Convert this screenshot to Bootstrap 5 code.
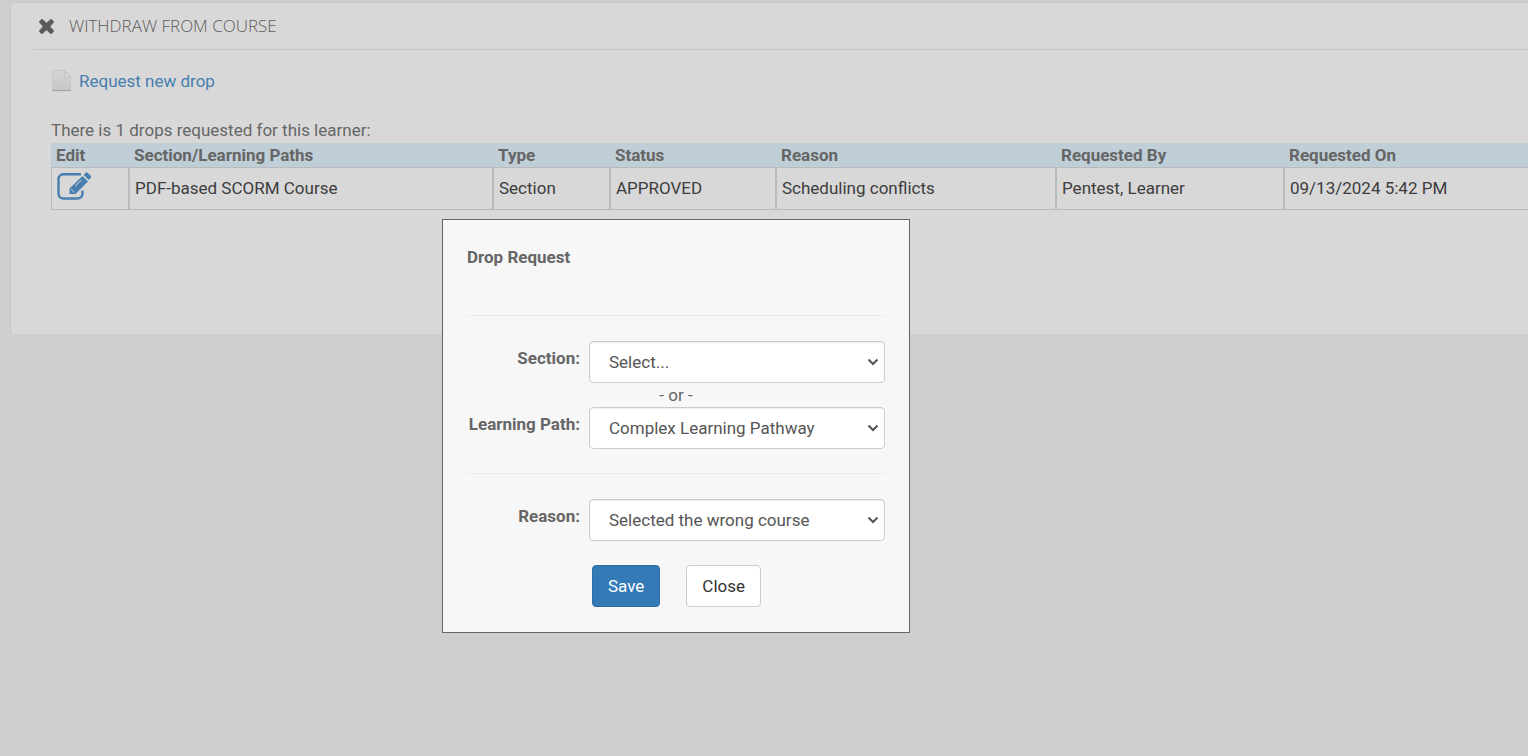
<!DOCTYPE html>
<html lang="en">
<head>
<meta charset="utf-8">
<meta name="viewport" content="width=device-width, initial-scale=1">
<title>Withdraw from Course</title>
<link href="https://cdn.jsdelivr.net/npm/bootstrap@5.3.0/dist/css/bootstrap.min.css" rel="stylesheet">
<style>
  body { background: #cfcfcf; color: #666; font-family: Roboto, sans-serif; font-size: 17px; line-height: 24px; overflow-x: hidden; }
  .course-panel { background: #d8d8d8; margin: 3px 0 0 11px; min-height: 331px; border-radius: 2px 0 0 2px; box-shadow: 0 1px 1px #c4c4c4, 0 0 1px 1px #c9c9c9; }
  .panel-title { margin-left: 22px; padding: 0 6px; height: 47px; border-bottom: 1px solid #c6c6c6; gap: 15px; }
  .panel-title h1 { font-family: "Open Sans", sans-serif; font-weight: 300; font-size: 17px; line-height: 24px; color: #5c5c5c; }
  .panel-content { padding: 19px 0 0 40px; }
  .drop-link { color: #477fb0; gap: 8px; }
  .summary { margin: 20px 0 1px; }
  .drops { table-layout: fixed; width: 100%; border-collapse: separate; border-spacing: 0; }
  .drops th { background: #c0ced7; padding: 0 5px; height: 24px; color: #666; }
  .drops td { border: 1px solid #bababa; padding: 0 5px 2px; height: 43px; color: #3d3d3d; }
  .drops td:last-child { border-right: 0; }
  .drops .c-edit { width: 78px; }
  .drops .c-path { width: 364px; }
  .drops .c-type { width: 117px; }
  .drops .c-status { width: 166px; }
  .drops .c-reason { width: 280px; }
  .drops .c-by { width: 228px; }
  .drop-dialog { left: 442px; top: 219px; width: 468px; background: #f7f7f7; border: 1px solid #666; padding: 25px 24px; }
  .drop-dialog h2 { font-size: 17px; line-height: 24px; font-weight: 700; margin: 0 0 46px; }
  .drop-dialog hr { margin: 0 0 25px; border-top: 1px solid #ebebeb; opacity: 1; }
  .field-row label { width: 113px; font-weight: 700; padding-top: 5px; }
  .field-row { gap: 9px; }
  .field-row .form-select { height: 42px; padding: 0 30px 0 19px; font-size: 17px; line-height: 24px; color: #555; border: 1px solid #ccc; border-radius: 4px; box-shadow: inset 0 1px 1px rgba(0,0,0,.075);
    background: #fff url("data:image/svg+xml,%3Csvg xmlns='http://www.w3.org/2000/svg' viewBox='0 0 12 8'%3E%3Cpath d='M1.500 1.500 6 6l4.500-4.500' fill='none' stroke='%23555' stroke-width='2'/%3E%3C/svg%3E") no-repeat right 5px center / 12px 8px; }
  .dialog-actions { margin-left: 125px; gap: 26px; }
  .dialog-actions .btn { font-size: 17px; line-height: 24px; padding: 8px 15px; border-radius: 4px; }
  .btn-save { background: #337ab7; border-color: #2e6da4; color: #fff; }
  .btn-close-dialog { background: #fff; border-color: #ccc; color: #333; }
</style>
</head>
<body>
<main class="course-panel">
  <header class="panel-title d-flex align-items-center">
    <svg width="15" height="15" viewBox="0 0 15 15" aria-hidden="true"><path d="M3.600.5 7.500 4 11.400.5a1 1 0 0 1 1.400 0L14.500 2.200a1 1 0 0 1 0 1.400L11 7.500l3.500 3.900a1 1 0 0 1 0 1.400l-1.700 1.700a1 1 0 0 1-1.400 0L7.500 11l-3.900 3.500a1 1 0 0 1-1.400 0L.5 12.800a1 1 0 0 1 0-1.400L4 7.500.5 3.600a1 1 0 0 1 0-1.400L2.200.5a1 1 0 0 1 1.400 0z" fill="#5a5a5a" stroke="#5a5a5a" stroke-width=".5"/></svg>
    <h1 class="m-0 text-uppercase">Withdraw from Course</h1>
  </header>
  <div class="panel-content">
    <a href="#" class="drop-link d-inline-flex align-items-center text-decoration-none">
      <svg width="20" height="22" viewBox="0 0 20 22" aria-hidden="true">
        <defs><linearGradient id="sheet" x1="0" y1="0" x2="0" y2="1"><stop offset="0" stop-color="#d5d5d5"/><stop offset="1" stop-color="#c6c6c6"/></linearGradient></defs>
        <path d="M1.500 0.500H13.500L19.500 7v14H1.500z" fill="url(#sheet)" stroke="#c8c8c8"/>
        <path d="M12.500.5 19.500 7.500Q15.500 5.500 14 7.500 14.500 3 12.500.5z" fill="#dedede" stroke="#bdbdbd" stroke-width=".8"/>
        <path d="M1 20.500H20" stroke="#a3a3a3"/>
      </svg>
      <span>Request new drop</span>
    </a>
    <p class="summary">There is 1 drops requested for this learner:</p>
    <table class="drops">
      <thead>
        <tr><th class="c-edit">Edit</th><th class="c-path">Section/Learning Paths</th><th class="c-type">Type</th><th class="c-status">Status</th><th class="c-reason">Reason</th><th class="c-by">Requested By</th><th>Requested On</th></tr>
      </thead>
      <tbody>
        <tr>
          <td class="align-top"><a href="#" aria-label="Edit" class="d-block pt-1"><svg class="d-block" width="35" height="30" viewBox="0 0 35 30" fill="none" aria-hidden="true">
            <path d="M24 2.200H6.500A5 5 0 0 0 1.500 7.200v14.300a5 5 0 0 0 5 5h14a5 5 0 0 0 5-5V18.500" stroke="#477fb0" stroke-width="2.400"/>
            <path d="M25.500 4 31 9.500 18.500 22H12.500V16.500z" fill="#477fb0"/>
            <path d="m26.700 2.800 1.800-1.800a1.600 1.600 0 0 1 2.400 0L33.500 3.600a1.600 1.600 0 0 1 0 2.400l-1.800 2z" fill="#477fb0"/>
            <path d="M24.500 7.800 18 14.300M14.200 17.300l3 3" stroke="#d8d8d8"/>
          </svg></a></td>
          <td>PDF-based SCORM Course</td><td>Section</td><td>APPROVED</td><td>Scheduling conflicts</td><td>Pentest, Learner</td><td>09/13/2024 5:42 PM</td>
        </tr>
      </tbody>
    </table>
  </div>
</main>

<form class="drop-dialog position-absolute" role="dialog" aria-labelledby="dialog-title">
  <h2 id="dialog-title">Drop Request</h2>
  <hr>
  <div class="field-row d-flex">
    <label for="section" class="text-end flex-shrink-0">Section:</label>
    <select id="section" class="form-select"><option>Select...</option></select>
  </div>
  <div class="text-center">- or -</div>
  <div class="field-row d-flex mb-4">
    <label for="path" class="text-end flex-shrink-0">Learning Path:</label>
    <select id="path" class="form-select"><option>Complex Learning Pathway</option></select>
  </div>
  <hr>
  <div class="field-row d-flex mb-4">
    <label for="reason" class="text-end flex-shrink-0">Reason:</label>
    <select id="reason" class="form-select"><option>Selected the wrong course</option></select>
  </div>
  <div class="dialog-actions d-flex">
    <button type="button" class="btn btn-save">Save</button>
    <button type="button" class="btn btn-close-dialog">Close</button>
  </div>
</form>
<script src="https://cdn.jsdelivr.net/npm/bootstrap@5.3.0/dist/js/bootstrap.bundle.min.js"></script>
</body>
</html>
